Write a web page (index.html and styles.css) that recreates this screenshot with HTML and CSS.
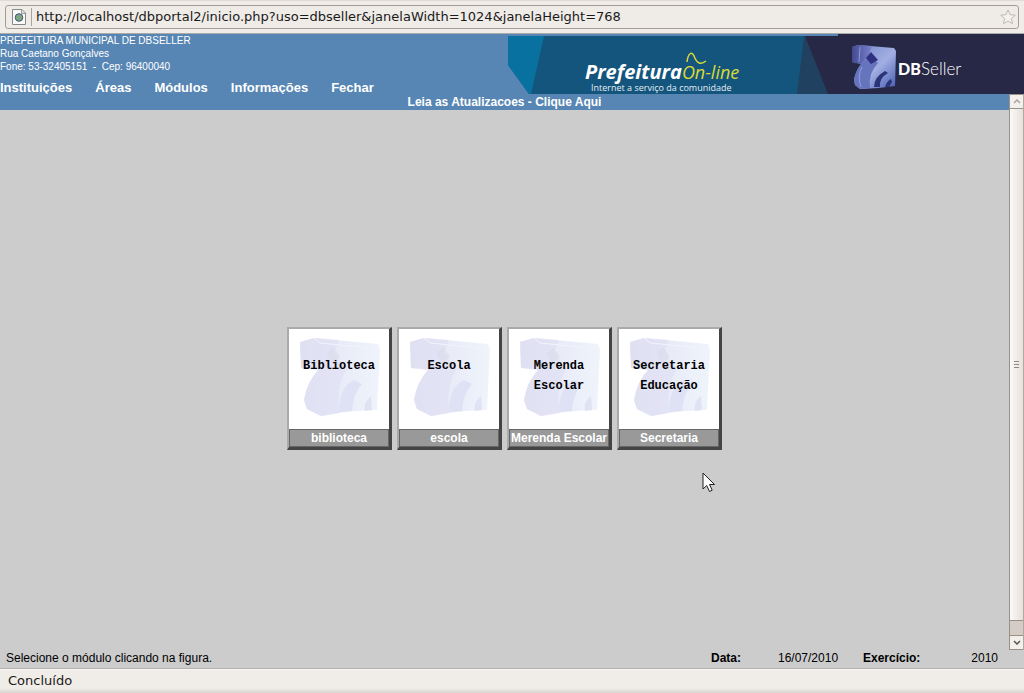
FILE: index.html
```
<!DOCTYPE html>
<html lang="pt-BR">
<head>
<meta charset="utf-8">
<title>DBPortal</title>
<link rel="stylesheet" href="styles.css">
</head>
<body>
<svg class="defs" aria-hidden="true">
  <defs>
    <linearGradient id="pale" x1="0" x2="1" y1="0" y2="0">
      <stop offset="0" stop-color="#e3e3f5"/>
      <stop offset="1" stop-color="#eff4fb"/>
    </linearGradient>
    <symbol id="cube" viewBox="0 0 100 100">
      <path d="M11 13L25 9 89 15 91 20 88 81 66 82 49 84 32 87 18 80 15 71Q18 53 29 41L12 39Z" fill="url(#pale)"/>
      <path d="M11 13L25 9 50 11 46 22 30 40 12 39Z" fill="#dedef2" opacity=".6"/>
      <path d="M29 41L44 24 58 40Q47 55 50 84L32 87 18 80 15 71Q18 53 29 41Z" fill="#dedef3" opacity=".65"/>
      <path d="M50 83Q50 58 65 51L73 55Q64 65 63 82ZM76 82Q74 73 82 67L83 81Z" fill="#dcdef2" opacity=".8"/>
      <path d="M38 25l6-7 7 10-8 6z" fill="#dadbe9" opacity=".6"/>
      <path d="M25 9L31 14 91 20" fill="none" stroke="#f3f4fb"/>
    </symbol>
  </defs>
</svg>

<div class="address-bar">
  <div class="address-box">
    <svg class="page-icon" viewBox="0 0 14 16" aria-hidden="true">
      <path d="M.5 .5H10L13.500 4V15.500H.5Z" fill="#fafbf9" stroke="#85888a"/>
      <path d="M9.500 1V4.500H13" fill="#d9dcda" stroke="#9a9d9d"/>
      <circle cx="7" cy="8.500" r="3.800" fill="#7d9fb2" stroke="#45596a"/>
      <path d="M4.500 8L7 6 9.500 8 8.500 11H6Z" fill="#7dab68"/>
    </svg>
    <input class="address-input" type="text" aria-label="Endereço" value="http://localhost/dbportal2/inicio.php?uso=dbseller&amp;janelaWidth=1024&amp;janelaHeight=768">
    <svg class="star" viewBox="0 0 16 16" aria-hidden="true">
      <path d="M8 1L10.100 5.700 15.300 6.200 11.400 9.600 12.500 14.700 8 12.100 3.500 14.700 4.600 9.600 .7 6.200 5.900 5.700Z" fill="#f4f1ed" stroke="#bdb9b4"/>
    </svg>
  </div>
</div>

<header class="header">
  <div class="header-left">
    <address class="org">PREFEITURA MUNICIPAL DE DBSELLER<br>Rua Caetano Gonçalves<br>Fone: 53-32405151 &nbsp;-&nbsp; Cep: 96400040</address>
    <nav class="menu">
      <a href="#">Instituições</a>
      <a href="#">Áreas</a>
      <a href="#">Módulos</a>
      <a href="#">Informações</a>
      <a href="#">Fechar</a>
    </nav>
  </div>
  <svg class="banner" viewBox="0 0 516 60" role="img" aria-label="Prefeitura On-line, DBSeller">
    <defs>
      <linearGradient id="face" x1="0" x2="1" y1="0" y2="1">
        <stop offset="0" stop-color="#7081c8"/>
        <stop offset=".55" stop-color="#a2afe2"/>
        <stop offset="1" stop-color="#455ab2"/>
      </linearGradient>
      <linearGradient id="side" x1="0" x2="1" y1="0" y2="0">
        <stop offset="0" stop-color="#444893"/>
        <stop offset="1" stop-color="#7884ca"/>
      </linearGradient>
    </defs>
    <path d="M0 2H330V60H21L0 31Z" fill="#14557d"/>
    <path d="M0 2H36L23 60H21L0 31Z" fill="#09719f"/>
    <path d="M296 2H305L330 60H289Z" fill="#214161"/>
    <path d="M297 2H330V0H516V60H320Z" fill="#272746"/>
    <text x="77" y="45"><tspan class="brand-bold">Prefeitura</tspan><tspan class="brand-light">On-line</tspan></text>
    <path d="M179 28C180 19 184 17 186 22C189 30 193 31 198 27" fill="none" stroke="#d8d936" stroke-width="1.500"/>
    <text class="brand-tag" x="83" y="57">Internet a serviço da comunidade</text>
    <path d="M344 13L350 11 386 14 388 17 387 52 371 54 352 55 347 51 346 45Q349 35 353 30L344 28Z" fill="url(#face)"/>
    <path d="M344 13L350 11 364 12 360 23 353 30 344 28Z" fill="url(#side)"/>
    <path d="M353 30L362 22 370 29Q360 39 362 54L352 55 347 51 346 45Q348 36 353 30Z" fill="#6574bd"/>
    <path d="M358 24L363 18 370 26 363 30Z" fill="#302f80"/>
    <path d="M366 53Q366 43 377 37L380 39Q371 44 372 53ZM377 53Q379 47 383 45L384 48 381 53Z" fill="#2a3476"/>
    <path d="M352 13L351 28M354 33Q349 42 353 53" stroke="#a4b2eb" fill="none" opacity=".7"/>
    <text class="logo-bold" x="390" y="41">DB</text>
    <text class="logo-light" x="413" y="41">Seller</text>
  </svg>
</header>

<div class="content">
  <div class="page">
    <div class="news"><a href="#">Leia as Atualizacoes - Clique Aqui</a></div>
    <main class="modules">
      <button class="module" type="button">
        <span class="picture"><svg class="cube"><use href="#cube"/></svg><span class="title">Biblioteca</span></span>
        <span class="caption">biblioteca</span>
      </button>
      <button class="module" type="button">
        <span class="picture"><svg class="cube"><use href="#cube"/></svg><span class="title">Escola</span></span>
        <span class="caption">escola</span>
      </button>
      <button class="module" type="button">
        <span class="picture"><svg class="cube"><use href="#cube"/></svg><span class="title">Merenda<br>Escolar</span></span>
        <span class="caption">Merenda Escolar</span>
      </button>
      <button class="module" type="button">
        <span class="picture"><svg class="cube"><use href="#cube"/></svg><span class="title">Secretaria<br>Educação</span></span>
        <span class="caption">Secretaria</span>
      </button>
    </main>
  </div>
  <div class="scrollbar" aria-hidden="true">
    <div class="arrow"><svg viewBox="0 0 8 5"><path d="M1 4L4 1 7 4" fill="none" stroke="#aaa49d" stroke-width="1.500"/></svg></div>
    <div class="thumb"><span class="grip"></span></div>
    <div class="track"></div>
    <div class="arrow"><svg viewBox="0 0 8 5"><path d="M1 1L4 4 7 1" fill="none" stroke="#555" stroke-width="1.500"/></svg></div>
  </div>
</div>

<div class="info">
  <span class="hint">Selecione o módulo clicando na figura.</span>
  <b class="info-label">Data:</b><span class="date">16/07/2010</span>
  <b class="info-label">Exercício:</b><span class="year">2010</span>
</div>
<footer class="status">Concluído</footer>

<svg class="pointer" viewBox="0 0 14 21" aria-hidden="true">
  <path d="M1 1V17L4.700 13.500 7.500 19.500 10.200 18.200 7.500 12.500H12.500Z" fill="#fff" stroke="#222"/>
</svg>
</body>
</html>
```

FILE: styles.css
```
* { box-sizing: border-box; }

body {
  margin: 0;
  min-height: 100vh;
  display: flex;
  flex-direction: column;
  position: relative;
  background: #ccc;
  color: #000;
  font: 12px/16px "Liberation Sans", Arial, sans-serif;
}

a { color: inherit; text-decoration: none; }

.defs { position: absolute; width: 0; height: 0; }

/* Browser location field */
.address-bar {
  padding: 4px 5px;
  background: #f0ece7;
  border-top: 1px solid #dedad5;
  border-bottom: 1px solid #aaa;
}

.address-box {
  display: flex;
  align-items: center;
  height: 24px;
  padding: 0 2px 0 6px;
  background: #efebe7;
  border: 1px solid #a59d95;
  border-radius: 3px;
}

.page-icon { width: 14px; height: 16px; flex: none; }

.address-input {
  flex: 1;
  min-width: 0;
  height: 18px;
  margin-left: 5px;
  padding: 0 4px;
  border: 0;
  border-left: 1px solid #aaa39c;
  background: none;
  color: #1a1a1a;
  font: 13px/18px "DejaVu Sans", sans-serif;
}

.star { width: 16px; height: 16px; flex: none; }

/* Portal header */
.header {
  display: flex;
  justify-content: space-between;
  background: #5786b4;
  color: #fff;
}

.org { font-size: 10px; font-style: normal; line-height: 13px; }

.menu {
  display: flex;
  gap: 23px;
  margin-top: 8px;
  font-size: 13px;
  line-height: 13px;
  font-weight: bold;
  white-space: nowrap;
}

.banner { width: 516px; height: 60px; flex: none; }
.brand-bold { font: italic bold 20px "Open Sans", sans-serif; fill: #fff; }
.brand-light { font: italic 18px "Open Sans", sans-serif; fill: #d8d936; }
.brand-tag { font: 9px "Open Sans", sans-serif; fill: #e3edf3; }
.logo-bold { font: 900 16px Lato, sans-serif; fill: #fff; }
.logo-light { font: 300 17px Lato, sans-serif; fill: #fff; }

/* Page area */
.content { flex: 1; display: flex; }
.page { flex: 1; display: flex; flex-direction: column; }

.news {
  background: #5786b4;
  color: #fff;
  font-weight: bold;
  text-align: center;
}

.modules {
  flex: 1;
  display: flex;
  flex-wrap: wrap;
  justify-content: center;
  align-content: center;
  gap: 5px;
  padding-top: 16px;
}

.module {
  width: 105px;
  padding: 0;
  border-style: solid;
  border-width: 2px 3px 3px 2px;
  border-color: #aaa #444 #444 #aaa;
  background: #999;
  font: inherit;
}

.picture { display: grid; height: 100px; background: #fff; }
.cube { grid-area: 1 / 1; width: 100px; height: 100px; }

.title {
  grid-area: 1 / 1;
  padding-top: 27px;
  color: #000;
  font: bold 12px/20px "Liberation Mono", monospace;
}

.caption {
  display: block;
  border: 1px solid #666;
  color: #fff;
  font-weight: bold;
  white-space: nowrap;
}

.scrollbar {
  width: 15px;
  display: flex;
  flex-direction: column;
  border-left: 1px solid #999189;
  border-right: 1px solid #b0a9a2;
}

.arrow {
  height: 15px;
  display: grid;
  place-items: center;
  background: #f3f0ec;
  border: solid #999189;
  border-width: 1px 0;
}

.arrow svg { width: 8px; height: 5px; }

.thumb {
  flex: 1;
  display: grid;
  place-items: center;
  background: linear-gradient(90deg, #fbfaf8, #e6e0da);
}

.grip {
  width: 5px;
  height: 7px;
  background: repeating-linear-gradient(#8f8983 0 1px, transparent 1px 3px);
}

.track { height: 15px; background: #d5cdc5; border-top: 1px solid #999189; }

/* Bottom bars */
.info { display: flex; padding: 0 26px 3px 6px; }
.hint { flex: 1; }
.info-label { width: 58px; }
.date { width: 94px; padding-left: 9px; }
.year { width: 77px; text-align: right; }

.status {
  padding: 1px 8px 3px;
  background: linear-gradient(#f0ece7 80%, #d8d4cf);
  border-top: 1px solid #f8f6f4;
  box-shadow: 0 -1px #b5b1ad;
  font: 13px/19px "DejaVu Sans", sans-serif;
  color: #1a1a1a;
}

.pointer {
  position: absolute;
  left: 702px;
  top: 472px;
  width: 14px;
  height: 21px;
}
```
